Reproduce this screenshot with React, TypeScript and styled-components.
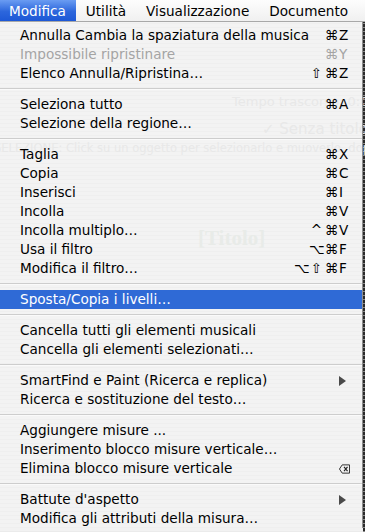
import React from 'react'
import styled, { createGlobalStyle } from 'styled-components'

type Entry =
  | {
      kind: 'item'
      label: string
      mods?: string[]
      keyChar?: string
      disabled?: boolean
      selected?: boolean
      submenu?: boolean
      erase?: boolean
    }
  | { kind: 'sep' }

const item = (label: string, extra: Partial<Extract<Entry, { kind: 'item' }>> = {}): Entry => ({
  kind: 'item',
  label,
  ...extra,
})
const sep: Entry = { kind: 'sep' }

const entries: Entry[] = [
  item('Annulla Cambia la spaziatura della musica', { mods: ['⌘'], keyChar: 'Z' }),
  item('Impossibile ripristinare', { mods: ['⌘'], keyChar: 'Y', disabled: true }),
  item('Elenco Annulla/Ripristina…', { mods: ['⇧', '⌘'], keyChar: 'Z' }),
  sep,
  item('Seleziona tutto', { mods: ['⌘'], keyChar: 'A' }),
  item('Selezione della regione…'),
  sep,
  item('Taglia', { mods: ['⌘'], keyChar: 'X' }),
  item('Copia', { mods: ['⌘'], keyChar: 'C' }),
  item('Inserisci', { mods: ['⌘'], keyChar: 'I' }),
  item('Incolla', { mods: ['⌘'], keyChar: 'V' }),
  item('Incolla multiplo…', { mods: ['^', '⌘'], keyChar: 'V' }),
  item('Usa il filtro', { mods: ['⌥', '⌘'], keyChar: 'F' }),
  item('Modifica il filtro…', { mods: ['⌥', '⇧', '⌘'], keyChar: 'F' }),
  sep,
  item('Sposta/Copia i livelli…', { selected: true }),
  sep,
  item('Cancella tutti gli elementi musicali'),
  item('Cancella gli elementi selezionati…'),
  sep,
  item('SmartFind e Paint (Ricerca e replica)', { submenu: true }),
  item('Ricerca e sostituzione del testo…'),
  sep,
  item('Aggiungere misure ...'),
  item('Inserimento blocco misure verticale…'),
  item('Elimina blocco misure verticale', { erase: true }),
  sep,
  item("Battute d'aspetto", { submenu: true }),
  item('Modifica gli attributi della misura…'),
]

const titles = ['Modifica', 'Utilità', 'Visualizzazione', 'Documento']

export default function App() {
  return (
    <Desktop>
      <GlobalStyle />
      <DocumentWindow aria-hidden="true">
        <Ghost style={{ left: 232, top: 94, fontSize: 13 }}>Tempo trascorso: 0:00</Ghost>
        <Ghost style={{ left: 262, top: 120, fontSize: 15 }}>✓ Senza titolo #1</Ghost>
        <Ghost style={{ left: -6, top: 141, fontSize: 11.5 }}>
          SELEZIONE: Click su un oggetto per selezionarlo e muoverlo, doppio click
        </Ghost>
        <GhostTitle style={{ left: 198, top: 226 }}>[Titolo]</GhostTitle>
      </DocumentWindow>

      <MenuBar>
        {titles.map((t, i) => (
          <MenuTitle key={t} $active={i === 0}>
            {t}
          </MenuTitle>
        ))}
      </MenuBar>

      <Menu>
        {entries.map((e, i) =>
          e.kind === 'sep' ? (
            <Separator key={i} />
          ) : (
            <Row key={i} $disabled={e.disabled} $selected={e.selected}>
              <Label>{e.label}</Label>
              <Shortcut>
                {e.mods?.map((m) => (
                  <Modifier key={m}>{m}</Modifier>
                ))}
                <KeyCell>
                  {e.keyChar}
                  {e.submenu && (
                    <svg width="7" height="10" viewBox="0 0 7 10">
                      <path d="M0 0 L7 5 L0 10 Z" fill="#4a4a4a" />
                    </svg>
                  )}
                  {e.erase && (
                    <svg width="12" height="10" viewBox="0 0 12 10">
                      <path
                        d="M3.5 0.5 H11.5 V9.5 H3.5 L0.5 5 Z"
                        fill="none"
                        stroke="#222"
                        strokeWidth="1"
                      />
                      <path d="M5.5 2.8 L9.3 7.2 M9.3 2.8 L5.5 7.2" stroke="#222" strokeWidth="1.3" />
                    </svg>
                  )}
                </KeyCell>
              </Shortcut>
            </Row>
          )
        )}
      </Menu>
    </Desktop>
  )
}

const GlobalStyle = createGlobalStyle`
  html, body {
    margin: 0;
    padding: 0;
  }
  body {
    width: 365px;
    height: 532px;
    overflow: hidden;
    font-family: 'DejaVu Sans', 'Liberation Sans', sans-serif;
    -webkit-font-smoothing: antialiased;
  }
`

const Desktop = styled.div`
  position: relative;
  width: 365px;
  height: 532px;
  overflow: hidden;
  background: repeating-linear-gradient(to bottom, #2a2a2a 0 3px, #8a8a8a 3px 4px);
`

// the score window behind the menu, seen through it
const DocumentWindow = styled.div`
  position: absolute;
  inset: 0 2px 0 0;
  background: repeating-linear-gradient(to bottom, #f2f2f2 0 3px, #ebebeb 3px 4px);
`

const Ghost = styled.span`
  position: absolute;
  white-space: nowrap;
  color: #e0e0e0;
  font-family: 'DejaVu Sans', sans-serif;
`

const GhostTitle = styled.span`
  position: absolute;
  font-family: 'Liberation Serif', serif;
  font-weight: bold;
  font-size: 21px;
  color: #e0e5e0;
`

const MenuBar = styled.div`
  position: relative;
  display: flex;
  height: 21px;
  background: linear-gradient(to bottom, #fdfdfd, #f0f0f0);
  border-bottom: 1px solid #a8a8a8;
`

const MenuTitle = styled.div<{ $active?: boolean }>`
  display: flex;
  align-items: center;
  padding: 0 10px;
  margin-left: ${({ $active }) => ($active ? '-1px' : '0')};
  font-size: 13.6px;
  color: ${({ $active }) => ($active ? '#fff' : '#000')};
  background: ${({ $active }) =>
    $active ? 'linear-gradient(to bottom, #6a9cf2, #2c66dc 55%, #1d58d6)' : 'none'};
`

const Menu = styled.div`
  position: relative;
  width: 362px;
  padding-top: 4px;
  background: rgba(246, 246, 246, 0.35);
  border-right: 1px solid #8e8e8e;
`

const Row = styled.div<{ $disabled?: boolean; $selected?: boolean }>`
  display: flex;
  align-items: center;
  height: 19px;
  padding: 0 12px 0 20px;
  font-size: 13.6px;
  line-height: 19px;
  color: ${({ $disabled, $selected }) => ($selected ? '#fff' : $disabled ? '#a4a4a4' : '#000')};
  background: ${({ $selected }) => ($selected ? '#2f6ad6' : 'transparent')};
`

const Label = styled.span`
  flex: 1;
  white-space: nowrap;
`

const Shortcut = styled.span`
  display: flex;
  align-items: center;
`

const Modifier = styled.span`
  width: 15px;
  text-align: center;
`

const KeyCell = styled.span`
  display: flex;
  align-items: center;
  width: 11px;
`

const Separator = styled.div`
  height: 12px;
  display: flex;
  flex-direction: column;
  justify-content: center;

  &::before {
    content: '';
    height: 1px;
    background: #cdcdcd;
  }
  &::after {
    content: '';
    height: 1px;
    background: #fafafa;
  }
`
